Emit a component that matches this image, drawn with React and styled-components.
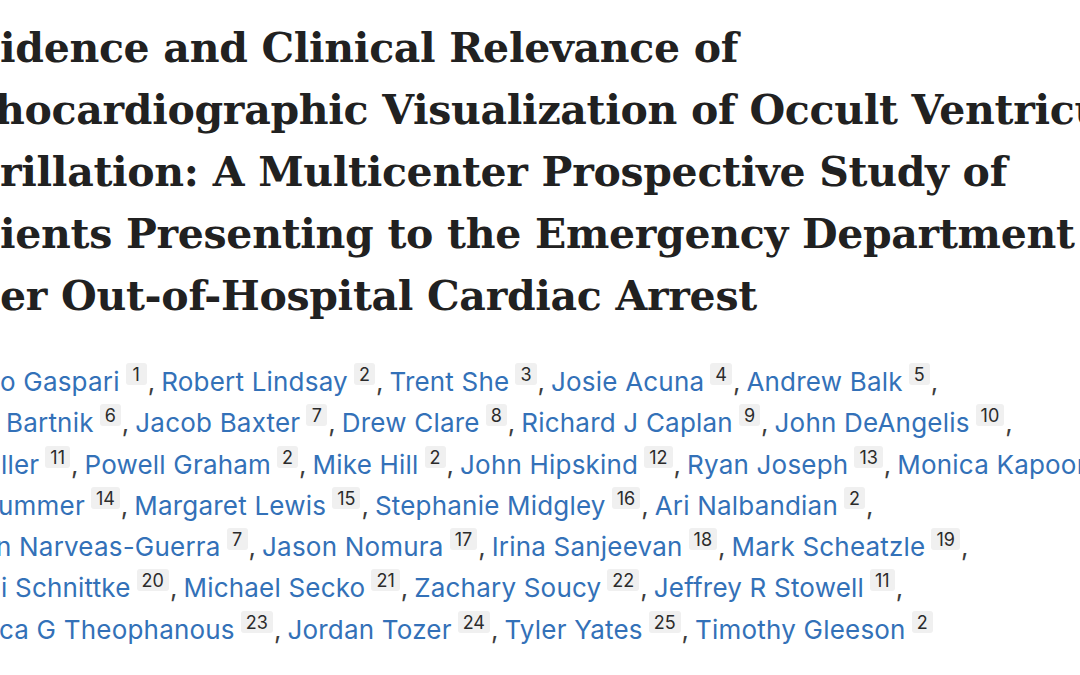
import React from "react";
import styled, { createGlobalStyle } from "styled-components";

const GlobalStyle = createGlobalStyle`
  html, body {
    margin: 0;
    padding: 0;
    background: #ffffff;
  }
  body {
    font-family: "Inter", "Liberation Sans", sans-serif;
  }
`;

const TITLE = [
  { text: "idence and Clinical Relevance of", shift: 0 },
  { text: "hocardiographic Visualization of Occult Ventricular", shift: -5 },
  { text: "rillation: A Multicenter Prospective Study of", shift: 0 },
  { text: "ients Presenting to the Emergency Department", shift: 0 },
  { text: "er Out-of-Hospital Cardiac Arrest", shift: 0 },
];

const AUTHORS = [
  {
    shift: 0,
    items: [
      ["o Gaspari", 1],
      ["Robert Lindsay", 2],
      ["Trent She", 3],
      ["Josie Acuna", 4],
      ["Andrew Balk", 5],
    ],
  },
  {
    shift: 6,
    items: [
      ["Bartnik", 6],
      ["Jacob Baxter", 7],
      ["Drew Clare", 8],
      ["Richard J Caplan", 9],
      ["John DeAngelis", 10],
    ],
  },
  {
    shift: 1,
    items: [
      ["ller", 11],
      ["Powell Graham", 2],
      ["Mike Hill", 2],
      ["John Hipskind", 12],
      ["Ryan Joseph", 13],
      ["Monica Kapoor", 2],
    ],
  },
  {
    shift: -2,
    items: [
      ["ummer", 14],
      ["Margaret Lewis", 15],
      ["Stephanie Midgley", 16],
      ["Ari Nalbandian", 2],
    ],
  },
  {
    shift: -4,
    items: [
      ["n Narveas-Guerra", 7],
      ["Jason Nomura", 17],
      ["Irina Sanjeevan", 18],
      ["Mark Scheatzle", 19],
    ],
  },
  {
    shift: 1,
    items: [
      ["i Schnittke", 20],
      ["Michael Secko", 21],
      ["Zachary Soucy", 22],
      ["Jeffrey R Stowell", 11],
    ],
  },
  {
    shift: -1,
    last: true,
    items: [
      ["ca G Theophanous", 23],
      ["Jordan Tozer", 24],
      ["Tyler Yates", 25],
      ["Timothy Gleeson", 2],
    ],
  },
];

const Page = styled.main`
  width: 1080px;
  height: 675px;
  overflow: hidden;
  background: #ffffff;
  padding-top: 17px;
  box-sizing: border-box;
`;

const Title = styled.h1`
  margin: 0;
  font-family: "DejaVu Serif", "Liberation Serif", serif;
  font-weight: 700;
  font-size: 41px;
  line-height: 62px;
  color: #212121;
  letter-spacing: -0.3px;
`;

const TitleLine = styled.span`
  display: block;
  white-space: nowrap;
  margin-left: ${(p) => p.$shift}px;
`;

const AuthorList = styled.div`
  margin-top: 34px;
  font-size: 26px;
  line-height: 41.3px;
  color: #222;
`;

const AuthorRow = styled.div`
  white-space: nowrap;
  margin-left: ${(p) => p.$shift}px;
`;

const AuthorName = styled.a`
  color: #3371b8;
  text-decoration: none;
  letter-spacing: 0.2px;
`;

const Affil = styled.sup`
  display: inline-block;
  vertical-align: top;
  margin: 2px 0 0 6px;
  padding: 0 5px;
  min-width: 11px;
  text-align: center;
  height: 22px;
  line-height: 23px;
  font-size: 18px;
  color: #2b2b2b;
  background: #f0f0f0;
  border-radius: 3px;
`;

const Sep = styled.span`
  color: #3d3d3d;
  margin-left: 1px;
  margin-right: 6px;
`;

export default function App() {
  return (
    <>
      <GlobalStyle />
      <Page>
        <Title>
          {TITLE.map((l, i) => (
            <TitleLine key={i} $shift={l.shift}>
              {l.text}
            </TitleLine>
          ))}
        </Title>
        <AuthorList>
          {AUTHORS.map((row, r) => (
            <AuthorRow key={r} $shift={row.shift}>
              {row.items.map(([name, num], i) => {
                const end = row.last && i === row.items.length - 1;
                return (
                  <React.Fragment key={i}>
                    <AuthorName href="#">{name}</AuthorName>
                    <Affil>{num}</Affil>
                    {!end && <Sep>,</Sep>}
                  </React.Fragment>
                );
              })}
            </AuthorRow>
          ))}
        </AuthorList>
      </Page>
    </>
  );
}
